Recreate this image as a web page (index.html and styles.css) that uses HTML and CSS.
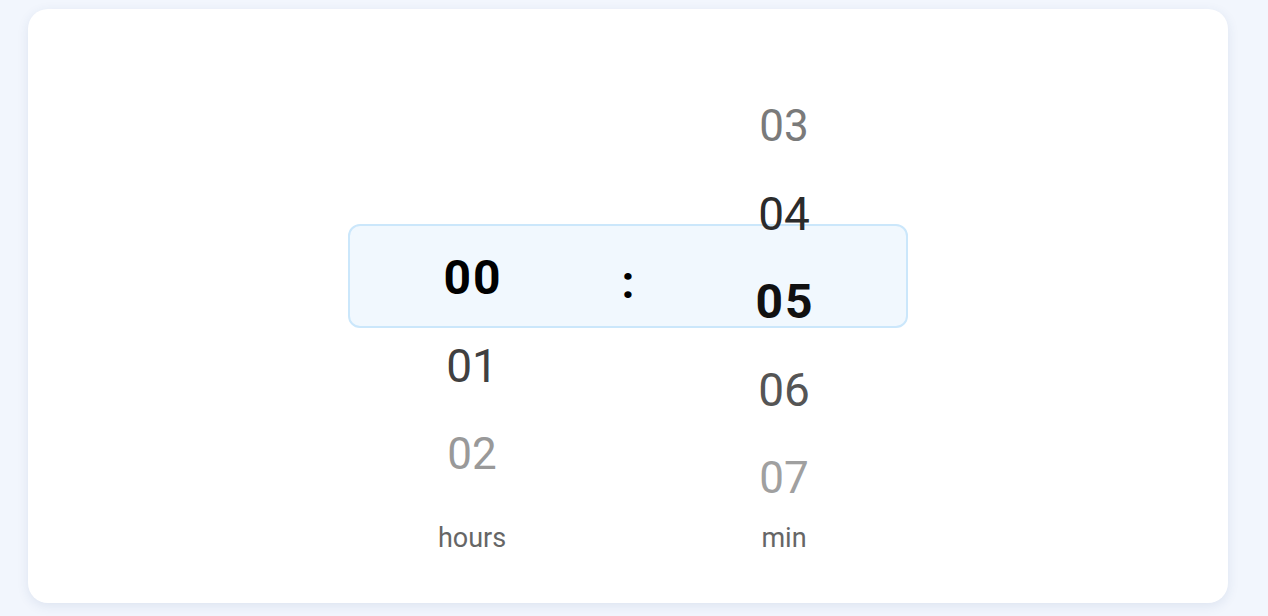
FILE: index.html
```html
<!DOCTYPE html>
<html lang="en">
<head>
<meta charset="utf-8">
<title>Time picker</title>
<link rel="stylesheet" href="styles.css">
</head>
<body>
  <div class="page">
    <section class="card">
      <div class="picker">
        <div class="highlight"></div>
        <div class="columns">
          <div class="wheel">
            <ul class="list list-hours">
              <li class="item sel c-0">00</li>
              <li class="item near c-h1">01</li>
              <li class="item far c-h2">02</li>
            </ul>
          </div>
          <div class="sep">:</div>
          <div class="wheel">
            <ul class="list list-min">
              <li class="item far c-m3">03</li>
              <li class="item near c-m4">04</li>
              <li class="item sel c-m5">05</li>
              <li class="item near c-m6">06</li>
              <li class="item far c-m7">07</li>
            </ul>
          </div>
        </div>
        <div class="labels">
          <span class="label">hours</span>
          <span></span>
          <span class="label">min</span>
        </div>
      </div>
    </section>
  </div>
</body>
</html>
```

FILE: styles.css
```css
* { box-sizing: border-box; }

html, body {
  margin: 0;
  padding: 0;
  background: #f2f6fd;
  font-family: Roboto, "Liberation Sans", Arial, sans-serif;
}

.page {
  padding: 9px 40px 13px 28px;
}

.card {
  width: 1200px;
  height: 594px;
  background: #ffffff;
  border-radius: 20px;
  box-shadow: 0 3px 12px rgba(40, 70, 130, 0.1);
  padding: 49px 0;
}

.picker {
  position: relative;
  width: 560px;
  margin: 0 auto;
}

.highlight {
  position: absolute;
  left: 0;
  top: 166px;
  width: 560px;
  height: 104px;
  background: #f1f8fe;
  border: 2px solid #cbe7fb;
  border-radius: 12px;
}

.columns {
  position: relative;
  display: grid;
  grid-template-columns: 248px 64px 248px;
  height: 440px;
}

.wheel {
  height: 440px;
}

.list {
  list-style: none;
  margin: 0;
  padding: 0;
}

.list-hours { margin-top: 176px; }
.list-min { margin-top: 24px; }

.item {
  height: 88px;
  line-height: 88px;
  text-align: center;
  font-size: 45px;
  font-weight: 400;
}

.item.near { font-size: 46px; }
.item.far { font-size: 44px; }
.item.sel {
  font-size: 48px;
  font-weight: 700;
  letter-spacing: 2px;
  padding-left: 2px;
}

.c-0 { color: #000000; }
.c-h1 { color: #404040; }
.c-h2 { color: #999999; }
.c-m3 { color: #7a7a7a; }
.c-m4 { color: #2b2b2b; }
.c-m5 { color: #111111; }
.c-m6 { color: #555555; }
.c-m7 { color: #a0a0a0; }

.sep {
  margin-top: 180px;
  height: 88px;
  line-height: 88px;
  text-align: center;
  font-size: 46px;
  font-weight: 700;
  color: #000;
}

.labels {
  display: grid;
  grid-template-columns: 248px 64px 248px;
  margin-top: 24px;
  height: 32px;
}

.label {
  text-align: center;
  font-size: 27px;
  line-height: 32px;
  color: #666666;
}
```
